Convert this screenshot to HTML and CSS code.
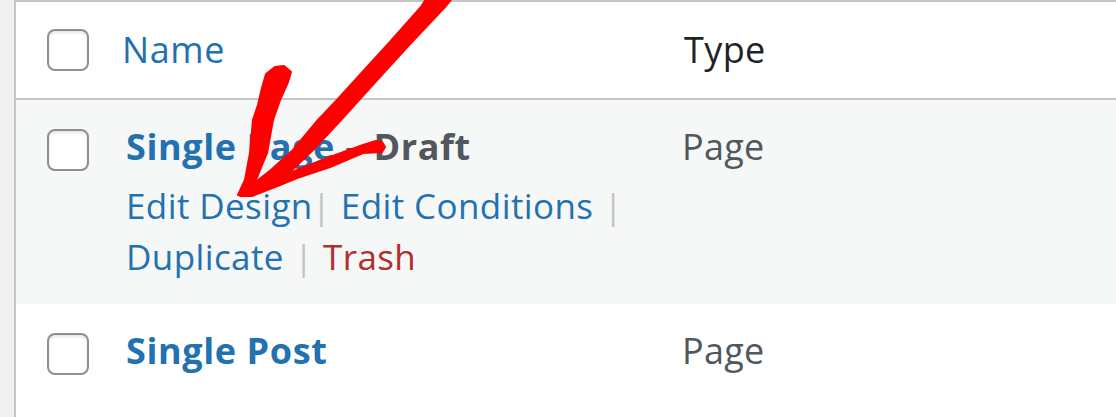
FILE: index.html
```html
<!DOCTYPE html>
<html lang="en">
<head>
<meta charset="utf-8">
<title>Templates</title>
<link rel="stylesheet" href="styles.css">
</head>
<body>
<div class="screen">
  <div class="table">
    <div class="row head">
      <div class="cb"><span class="box"></span></div>
      <div class="col-name"><a class="sort">Name</a></div>
      <div class="col-type"><span class="th-type">Type</span></div>
    </div>
    <div class="row item alt">
      <div class="cb"><span class="box"></span></div>
      <div class="col-name">
        <div class="title"><a class="link">Single Page</a><span class="state"> – Draft</span></div>
        <div class="actions">
          <span class="act"><a class="link">Edit Design</a><span class="sep first">|</span></span>
          <span class="act"><a class="link">Edit Conditions</a><span class="sep">|</span></span>
          <span class="act"><a class="link">Duplicate</a><span class="sep">|</span></span>
          <span class="act"><a class="trash">Trash</a></span>
        </div>
      </div>
      <div class="col-type"><span class="type">Page</span></div>
    </div>
    <div class="row item">
      <div class="cb"><span class="box"></span></div>
      <div class="col-name">
        <div class="title"><a class="link">Single Post</a></div>
      </div>
      <div class="col-type"><span class="type">Page</span></div>
    </div>
  </div>
  <svg class="arrow" width="1116" height="417" viewBox="0 0 1116 417" aria-hidden="true">
    <g fill="#ff0000" stroke="#ff0000" stroke-width="2" stroke-linejoin="round">
      <path d="M428,-4 L421,7 L389,43 L367,67 L337,100 L318,120 L293,150 L271,170 L240,194 L252,195 L290,172 L313,150 L341,120 L359,100 L389,67 L411,43 L445,7 L454,-4 Z"/>
      <path d="M275,67 L266,74 L262,88 L258,105 L253,120 L250,153 L245,180 L238,195 L250,195 L262,165 L267,153 L273,120 L280,100 L288,82 L291,72 L284,66 Z"/>
      <path d="M240,192 L273,181 L297,170 L330,157 L363,145 L376,141 L382,142 L385,147 L382,152 L363,153 L330,167 L297,178 L280,185 L252,196 L240,196 Z"/>
    </g>
  </svg>
</div>
</body>
</html>
```

FILE: styles.css
```css
* {
  box-sizing: border-box;
}

body {
  margin: 0;
  background: #f0f0f1;
  font-family: "Open Sans", "Noto Sans", sans-serif;
}

.screen {
  position: relative;
  width: 1116px;
  height: 417px;
  overflow: hidden;
  padding-left: 14px;
}

.table {
  height: 100%;
  background: #fff;
  border-left: 2px solid #c3c4c7;
  border-top: 2px solid #c3c4c7;
}

.row {
  display: grid;
  grid-template-columns: 102px 564px 1fr;
}

.head {
  height: 98px;
  align-items: center;
  border-bottom: 2px solid #c3c4c7;
}

.item {
  align-items: start;
  padding-top: 22px;
}

.alt {
  height: 204px;
  background: #f6f7f7;
}

.cb {
  padding-left: 31px;
}

.item .cb {
  padding-top: 7px;
}

.box {
  display: block;
  width: 42px;
  height: 42px;
  background: #fff;
  border: 2px solid #8c8f94;
  border-radius: 8px;
  box-shadow: inset 0 2px 3px rgba(0, 0, 0, 0.1);
}

.sort {
  display: block;
  padding-left: 4px;
  font-size: 36px;
  letter-spacing: 0.6px;
  line-height: 50px;
  color: #2271b1;
}

.th-type {
  display: block;
  padding-left: 2px;
  font-size: 36px;
  letter-spacing: 0.4px;
  line-height: 50px;
  color: #1d2327;
}

.col-name {
  padding-left: 8px;
}

.head .col-name {
  padding-left: 0;
}

.title {
  font-size: 36px;
  line-height: 50px;
  font-weight: 700;
  letter-spacing: 0.6px;
}

.link {
  color: #2271b1;
}

.state {
  color: #50575e;
}

.actions {
  margin-top: 8px;
  font-size: 35px;
  letter-spacing: 0.4px;
  line-height: 51px;
}

.act {
  white-space: nowrap;
}

.sep {
  color: #c3c4c7;
  margin: 0 0 0 10px;
}

.sep.first {
  margin: 0 0 0 -1px;
}

.trash {
  color: #b32d2e;
}

.type {
  display: block;
  font-size: 36px;
  letter-spacing: 0.3px;
  line-height: 50px;
  color: #50575e;
}

.arrow {
  position: absolute;
  top: 0;
  left: 0;
  pointer-events: none;
}
```
